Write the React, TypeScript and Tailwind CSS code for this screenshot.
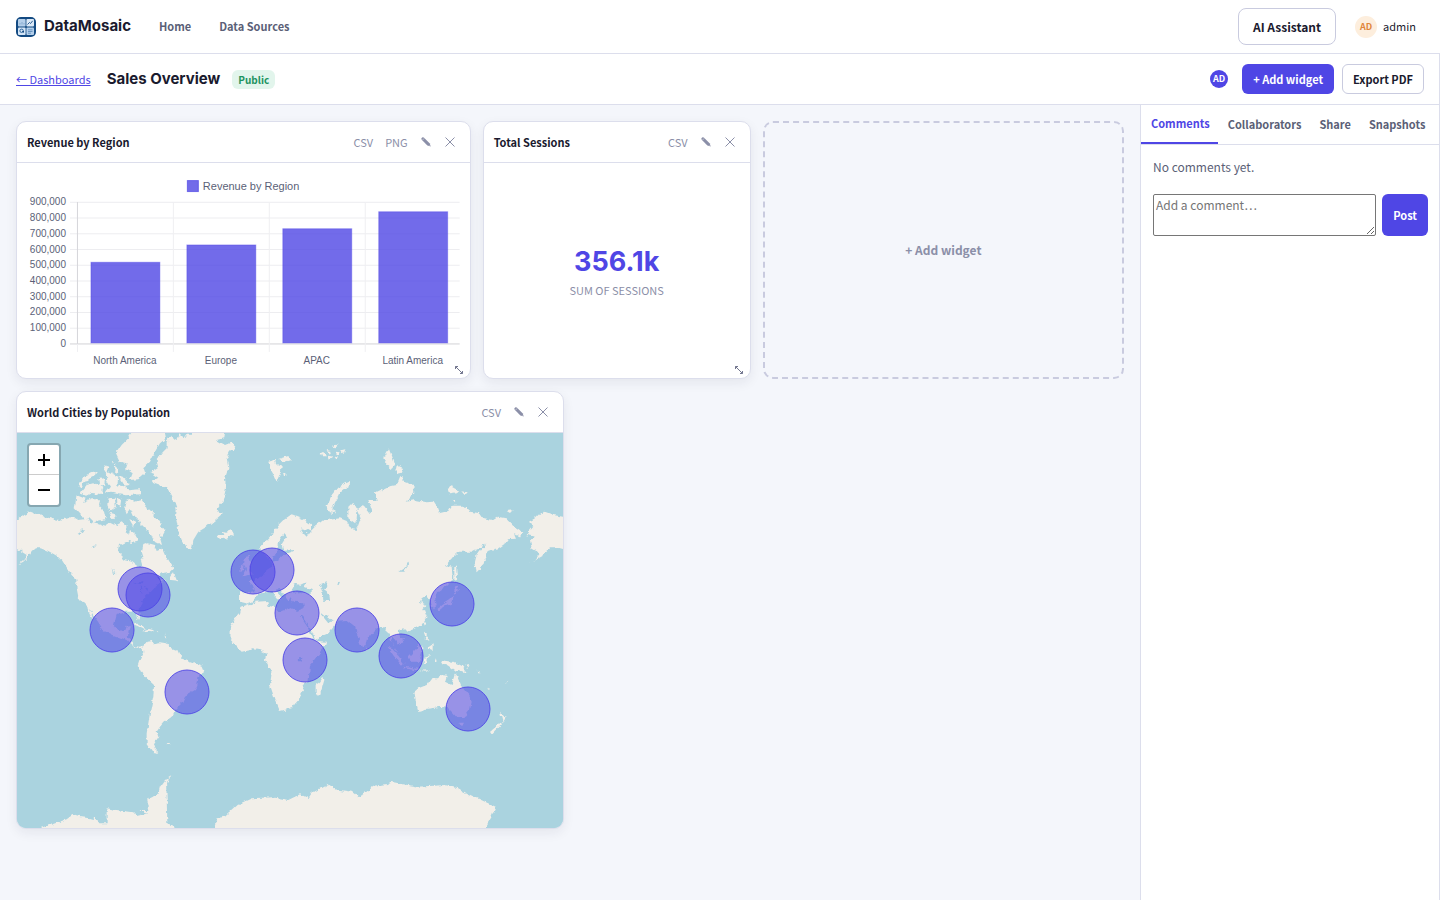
import type { ReactNode } from "react";

const bars = [
  { label: "North America", value: 519000 },
  { label: "Europe", value: 629000 },
  { label: "APAC", value: 732000 },
  { label: "Latin America", value: 840000 },
];

const cities = [
  { name: "Chicago", x: 390, y: 612 },
  { name: "New York", x: 414, y: 630 },
  { name: "Mexico City", x: 306, y: 735 },
  { name: "Sao Paulo", x: 531, y: 921 },
  { name: "London", x: 729, y: 561 },
  { name: "Berlin", x: 786, y: 555 },
  { name: "Cairo", x: 861, y: 684 },
  { name: "Nairobi", x: 885, y: 825 },
  { name: "Mumbai", x: 1041, y: 735 },
  { name: "Singapore", x: 1173, y: 813 },
  { name: "Tokyo", x: 1326, y: 657 },
  { name: "Sydney", x: 1374, y: 972 },
];

const land = [
  // North America
  "0,405 21,405 40,390 62,380 85,390 105,395 130,403 150,405 165,400 185,393 205,405 235,402 240,412 265,418 290,425 300,410 320,420 335,412 350,425 345,440 365,455 350,470 330,480 325,505 345,525 365,530 385,545 395,548 390,530 400,515 395,500 400,480 415,475 435,480 440,495 458,488 470,515 490,550 480,560 455,565 440,575 450,585 465,582 445,600 430,610 405,635 390,660 388,690 385,708 378,690 370,680 345,680 320,690 312,720 325,740 345,738 350,725 362,722 358,745 350,755 365,768 370,780 385,785 398,782 398,788 385,790 365,780 350,765 310,750 280,735 265,712 250,690 240,675 225,660 205,635 198,600 200,585 175,555 160,530 140,512 115,498 95,490 75,490 65,498 55,515 40,530 25,538 45,520 50,510 35,500 21,490 0,490",
  "480,572 490,560 502,590 480,588",
  "232,672 240,690 252,708 246,690 240,676",
  // South America
  "398,785 410,770 425,768 430,775 450,772 468,775 480,788 505,798 515,820 545,830 575,842 580,855 575,870 565,880 562,900 555,915 525,932 515,955 492,978 487,990 470,1005 460,1013 450,1025 440,1040 445,1055 432,1075 438,1095 448,1104 425,1100 410,1078 410,1045 420,985 430,935 432,900 410,880 390,852 383,840 390,820 400,802",
  // Greenland
  "470,170 485,155 500,165 508,148 520,160 530,146 555,146 570,130 645,130 640,160 620,165 645,180 665,172 680,186 660,200 650,220 655,250 645,280 648,310 638,350 625,370 635,388 615,405 590,425 565,440 550,465 545,495 530,490 515,465 505,435 498,400 500,370 485,330 470,308 440,298 425,290 445,278 420,262 445,245 440,225 455,205 470,190",
  // Arctic archipelago
  "375,130 462,130 468,160 450,175 438,195 420,230 400,250 405,265 385,283 360,285 368,265 345,250 350,235 330,230 318,205 335,180 355,160",
  "280,240 295,245 290,260 305,268 300,280 285,262", "303,225 312,232 305,235",
  "205,300 225,272 245,262 260,258 255,270 235,280 240,290 220,295 212,308",
  "210,325 230,300 255,293 280,308 275,327 245,324 228,332", "265,283 288,278 286,302 268,302",
  "285,320 300,302 290,285 305,268 325,278 322,300 345,305 355,316 390,313 390,328 345,331 308,324",
  "316,238 328,260 312,264", "325,273 345,280 362,300 343,302",
  "200,331 227,341 219,354 245,343 270,343 267,360 282,380 287,402 262,407 255,417 238,400 222,404 213,390 194,370",
  "296,340 314,338 318,366 300,378 292,360", "321,338 334,343 330,368 322,360", "298,383 320,390 308,404",
  "346,350 365,342 375,350 395,344 414,372 432,380 430,395 444,405 467,435 457,453 447,447 456,480 430,467 418,442 406,430 393,417 386,402 368,392 360,374 350,388 343,368",
  "360,438 380,453 384,470 365,474 353,460", "358,403 377,408 372,427",
  // Iceland and the British Isles
  "625,450 640,450 635,438 652,440 665,435 672,448 650,465 632,458",
  "705,515 716,513 722,530 718,545 732,565 710,572 698,573 708,555 702,538", "690,545 700,540 700,558 688,560",
  // Svalbard and Franz Josef Land
  "775,230 795,225 800,240 815,245 812,260 800,290 790,268 780,250", "805,222 835,213 842,225 820,232", "818,262 830,268 822,276",
  "925,208 940,204 948,214 935,214", "950,195 962,198 956,206", "966,184 982,178 978,192", "975,200 992,202 985,212", "990,196 1006,192 1002,204", "955,212 970,215 960,222", "974,216 984,214 980,224",
  // Africa and Eurasia
  "690,650 690,622 715,622 735,618 728,600 715,590 735,585 755,575 770,555 785,545 785,525 770,515 755,505 750,490 765,470 785,450 805,420 820,405 845,388 865,395 885,405 903,418 903,432 890,438 870,430 880,445 890,455 900,440 915,425 940,405 955,405 990,400 1010,408 1025,432 1037,435 1043,420 1015,400 1015,365 1030,350 1040,370 1037,400 1043,425 1052,400 1040,375 1060,360 1080,385 1087,380 1075,345 1100,345 1095,325 1135,305 1160,300 1170,275 1185,292 1210,300 1213,325 1190,350 1215,345 1250,352 1270,350 1280,365 1287,385 1315,378 1325,362 1360,362 1380,380 1410,385 1420,400 1450,405 1465,395 1490,400 1515,425 1537,440 1530,455 1510,447 1515,458 1490,460 1493,470 1465,490 1445,495 1430,500 1420,540 1400,562 1395,530 1400,510 1420,485 1430,475 1405,490 1385,500 1345,500 1325,520 1308,540 1325,545 1328,575 1315,600 1285,620 1275,635 1280,660 1268,670 1260,645 1250,630 1235,640 1230,650 1250,660 1240,670 1250,695 1235,720 1210,733 1190,740 1180,730 1165,735 1170,755 1185,770 1170,780 1150,755 1145,770 1160,795 1168,812 1155,790 1142,765 1135,745 1125,735 1120,725 1105,725 1090,740 1070,765 1067,780 1055,785 1045,760 1035,725 1010,705 975,707 965,705 940,685 935,687 955,712 970,705 980,715 955,745 920,760 917,768 948,770 945,780 920,815 900,840 898,865 895,890 878,900 882,915 865,945 845,970 810,978 795,945 780,900 785,865 765,825 770,805 750,795 730,793 695,800 675,780 658,760 660,725 675,700 690,685 695,665 718,657",
  "940,875 943,885 930,930 917,925 917,900 930,890",
  // Russian Arctic islands
  "1018,290 1022,297 990,320 978,345 967,365 975,385 960,382 950,365 965,330 985,305",
  "1128,205 1137,190 1145,210 1155,238 1145,252 1130,238 1120,220", "1160,245 1168,240 1180,262 1155,268",
  "1313,312 1325,304 1347,316 1338,325 1318,328", "1350,318 1370,322 1365,327", "1325,342 1340,346 1332,351", "1490,378 1508,376 1500,384",
  // Eastern Alaska wrap
  "1690,395 1659,395 1630,390 1605,380 1590,385 1575,400 1557,410 1570,425 1560,437 1550,450 1575,455 1560,465 1565,490 1590,505 1575,525 1555,535 1600,510 1620,490 1640,490 1659,495 1690,495",
  // Sakhalin and Japan
  "1333,545 1338,545 1342,585 1333,590", "1335,603 1350,613 1332,626", "1332,630 1326,655 1300,665 1285,678 1283,668 1300,656 1318,645",
  // South-east Asia
  "1195,735 1203,733 1200,742", "1240,710 1247,708 1244,722", "1242,742 1250,740 1250,755 1262,770 1248,762", "1253,788 1268,778 1268,795 1260,790",
  "1195,815 1220,790 1228,780 1237,785 1235,810 1225,830 1205,830", "1133,785 1145,790 1165,812 1184,838 1172,838 1148,808", "1180,845 1222,851 1220,856 1182,850",
  "1240,820 1262,812 1248,822 1254,840 1246,832 1242,842", "1230,857 1260,856 1252,860", "1275,820 1280,830 1275,832",
  "1067,782 1075,792 1070,798",
  "1290,825 1305,828 1330,830 1355,842 1372,864 1345,855 1335,857 1315,842 1297,838", "1362,842 1382,840 1372,848", "1400,855 1412,862 1405,862",
  // Australia and New Zealand
  "1213,920 1225,910 1250,900 1265,880 1285,880 1290,870 1310,872 1305,890 1325,900 1335,865 1345,880 1355,905 1375,930 1385,950 1380,975 1365,995 1340,997 1325,980 1315,970 1290,965 1265,970 1245,972 1225,978 1218,950",
  "1347,1013 1362,1013 1355,1026", "1470,980 1480,992 1490,995 1478,1012 1474,998", "1470,1010 1476,1018 1450,1045 1440,1040 1458,1025", "1430,910 1442,915 1440,918", "1486,895 1498,890 1490,898",
  // Caribbean
  "370,718 385,716 412,732 398,730", "398,738 415,732 435,738 425,742", "440,738 448,739 444,742", "465,745 468,760 464,758", "482,1077 470,1077 474,1082",
  // Antarctica
  "95,1365 95,1329 140,1313 170,1303 187,1290 205,1295 260,1303 268,1315 290,1315 290,1270 320,1275 370,1282 380,1293 415,1285 388,1275 418,1275 412,1245 432,1235 445,1225 450,1205 465,1185 490,1170 468,1190 470,1235 472,1315 490,1329 490,1365",
  "612,1365 612,1329 620,1300 640,1297 680,1260 725,1240 790,1237 835,1245 870,1228 895,1240 905,1225 955,1197 975,1213 1025,1220 1047,1237 1090,1205 1135,1200 1140,1190 1175,1197 1225,1205 1305,1200 1345,1210 1370,1225 1425,1250 1457,1265 1445,1295 1425,1329 1425,1365",
];

const water = [
  // Mediterranean
  "712,655 735,646 742,628 770,622 785,618 800,638 812,646 815,638 795,614 808,612 822,630 835,648 840,636 852,650 880,652 882,670 860,678 835,670 810,680 800,668 776,662 772,648 740,650 720,658",
  // Black Sea, Caspian and Aral
  "845,613 855,595 870,600 890,590 880,605 905,615 905,627 870,621 850,623",
  "930,600 950,592 955,605 942,613 958,625 960,648 940,647 938,625", "978,592 990,590 985,602",
  // Baltic
  "803,500 803,472 822,446 829,455 815,478 820,494 855,492 850,499 825,508 800,525 785,528 792,512",
  // Red Sea
  "870,693 877,693 892,716 906,740 917,765 908,758 890,722",
  // Lakes
  "1165,560 1188,545 1195,530 1197,540 1180,560", "867,820 877,818 875,830 866,828", "308,548 316,568 311,566", "210,435 225,432 218,442", "200,445 215,442 210,450", "240,485 262,480 250,486", "372,596 400,588 398,598", "392,604 398,608 394,628", "400,600 415,608 412,618",
];

const body = "font-['Noto_Sans_CJK_SC','Noto_Sans',sans-serif]";
const heading = "font-[Inter,'Open_Sans',sans-serif]";

function Logo() {
  return (
    <svg viewBox="0 0 20 20" className="h-5 w-5 shrink-0" aria-hidden="true">
      <rect width="20" height="20" rx="5" fill="#134a82" />
      <rect x="2" y="2" width="7.6" height="7.6" rx="1" fill="#b4cfea" />
      <rect x="10.4" y="2" width="7.6" height="7.6" rx="1" fill="#dbe9f7" />
      <rect x="2" y="10.4" width="7.6" height="7.6" rx="1" fill="#d5e6f7" />
      <rect x="10.4" y="10.4" width="7.6" height="7.6" rx="1" fill="#b4cfea" />
      <path d="M4 7.5V6M6 7.5V5M8 7.5V6" stroke="#86aacf" strokeWidth="1" />
      <path d="M11.5 7.5l2-2 1 1 2.2-2.7" stroke="#134a82" strokeWidth=".9" fill="none" />
      <circle cx="5.6" cy="13.8" r="1.7" fill="none" stroke="#2d659c" strokeWidth="1" />
      <path d="M5.6 14h2.4v2z" fill="#134a82" />
      <path d="M12 12.8h4.5M12 14.5h4.5M12 16.2h3" stroke="#5585b6" strokeWidth=".8" />
    </svg>
  );
}

function Widget({ title, actions, resizable, className, children }: { title: string; actions: string[]; resizable?: boolean; className: string; children: ReactNode }) {
  return (
    <section className={`relative flex flex-col overflow-hidden rounded-[10px] border border-[#dcdeec] bg-white shadow-[0_4px_12px_rgba(30,30,60,0.07)] ${className}`}>
      <header className="flex h-10 shrink-0 items-center justify-between pr-2 pl-2.5">
        <h2 className="text-[11px] font-bold text-[#1a1a2e]">{title}</h2>
        <div className="flex items-center text-[11px] text-[#8b8fa8]">
          {actions.map((action) => (
            <button key={action} type="button" className="px-1.5">{action}</button>
          ))}
          <button type="button" aria-label={`Edit ${title}`} className="flex w-6 justify-center">
            <svg viewBox="0 0 10 10" className="h-2.5 w-2.5" aria-hidden="true">
              <path d="M.3 1.2L1.5.2l1.3.4L8.6 6.2l1.2 3.3-3.4-1L.7 2.8z" fill="currentColor" />
              <path d="M1.6 3l1.5-1.6M8.6 8.8l.6-.7" stroke="#fff" strokeWidth=".5" />
            </svg>
          </button>
          <button type="button" aria-label={`Remove ${title}`} className="flex w-6 justify-center">
            <svg viewBox="0 0 10 10" className="h-2.5 w-2.5" aria-hidden="true">
              <path d="M.5.5l9 9M9.5.5l-9 9" stroke="currentColor" strokeWidth="1" />
            </svg>
          </button>
        </div>
      </header>
      <div className="flex min-h-0 flex-1 flex-col border-t border-[#dcdeec]">{children}</div>
      {resizable && (
        <svg viewBox="0 0 10 10" className="absolute right-1.5 bottom-[3px] h-2.5 w-2.5" aria-hidden="true">
          <path d="M1.5 4V1.5H4M1.5 1.5l7 7M8.5 6v2.5H6" fill="none" stroke="#73778f" strokeWidth="1" />
        </svg>
      )}
    </section>
  );
}

function RevenueChart() {
  const bottom = 181;
  const step = 15.75;
  const left = 60;
  const band = 96;
  return (
    <svg viewBox="0 0 453 215" className="h-full w-full font-['Liberation_Sans',sans-serif]" role="img" aria-label="Revenue by Region">
      <rect x="170.5" y="17.5" width="11" height="11" fill="#726be9" stroke="#4f46e5" strokeOpacity=".7" />
      <text x="186" y="27" fontSize="11" fill="#5b5f77">Revenue by Region</text>
      {Array.from({ length: 10 }, (_, i) => (
        <g key={i}>
          <line x1="53" x2="443" y1={bottom - i * step} y2={bottom - i * step} stroke={i === 0 ? "#d2d2d6" : "#ededf0"} />
          <text x="49" y={bottom - i * step + 3} textAnchor="end" fontSize="10" fill="#5b5f77">{(i * 100000).toLocaleString("en-US")}</text>
        </g>
      ))}
      {[0, 1, 2, 3].map((i) => (
        <line key={i} x1={left + i * band + 0.5} x2={left + i * band + 0.5} y1="39" y2="189" stroke="#efeff2" />
      ))}
      <line x1="60.5" x2="60.5" y1="39" y2="181" stroke="#d6d6da" />
      {bars.map((bar, i) => {
        const height = (bar.value / 100000) * step;
        return (
          <g key={bar.label}>
            <rect x={left + i * band + 14} y={bottom - height} width="69" height={height - 1} fill="#4f46e5" fillOpacity=".8" stroke="#4f46e5" strokeOpacity=".4" />
            <text x={left + i * band + 48} y="201" textAnchor="middle" fontSize="10" fill="#5b5f77">{bar.label}</text>
          </g>
        );
      })}
    </svg>
  );
}

function WorldMap() {
  return (
    <div className="relative min-h-0 flex-1 bg-[#aad3df]">
      <svg viewBox="21 144 1638 1185" preserveAspectRatio="xMidYMid slice" className="absolute inset-0 h-full w-full" role="img" aria-label="World map with city markers">
        <defs>
          <filter id="coast" x="-10" y="110" width="1710" height="1270" filterUnits="userSpaceOnUse">
            <feTurbulence type="fractalNoise" baseFrequency="0.06" numOctaves="3" seed="4" result="noise" />
            <feDisplacementMap in="SourceGraphic" in2="noise" scale="15" xChannelSelector="R" yChannelSelector="G" />
          </filter>
        </defs>
        <rect x="21" y="144" width="1638" height="1185" fill="#aad3df" />
        <g filter="url(#coast)">
          {land.map((points) => <polygon key={points} points={points} fill="#f2efe9" />)}
          {water.map((points) => <polygon key={points} points={points} fill="#aad3df" />)}
        </g>
        {cities.map((city) => (
          <circle key={city.name} cx={city.x} cy={city.y} r="66" fill="#4f46e5" fillOpacity=".55" stroke="#4f46e5" strokeOpacity=".9" strokeWidth="3" />
        ))}
      </svg>
      <div className="absolute top-2.5 left-2.5 flex flex-col overflow-hidden rounded border-2 border-[#86a7b1] bg-white">
        <button type="button" aria-label="Zoom in" className="flex h-[30px] w-[30px] items-center justify-center border-b border-[#ccc]">
          <svg viewBox="0 0 12 12" className="h-3 w-3" aria-hidden="true"><path d="M0 6h12M6 0v12" stroke="#000" strokeWidth="2" /></svg>
        </button>
        <button type="button" aria-label="Zoom out" className="flex h-[30px] w-[30px] items-center justify-center">
          <svg viewBox="0 0 12 12" className="h-3 w-3" aria-hidden="true"><path d="M0 6h12" stroke="#000" strokeWidth="2" /></svg>
        </button>
      </div>
    </div>
  );
}

export default function App() {
  return (
    <div className={`flex min-h-screen flex-col bg-[#f4f6fb] text-[#1a1a2e] ${body}`}>
      <header className="flex h-[53px] items-center justify-between bg-white px-4">
        <div className="flex items-center">
          <Logo />
          <span className={`ml-2 text-[15px] font-bold ${heading}`}>DataMosaic</span>
          <nav className="ml-7 flex gap-7 text-[11px] font-bold text-[#5b5f77]">
            <a href="#home">Home</a>
            <a href="#sources">Data Sources</a>
          </nav>
        </div>
        <div className="flex items-center">
          <button type="button" className="h-[37px] rounded-lg border border-[#c9cbdf] bg-white px-3.5 text-xs font-bold">AI Assistant</button>
          <button type="button" className="ml-[19px] flex items-center gap-1.5 pr-2 text-[11px]">
            <span className="flex h-[22px] w-[22px] items-center justify-center rounded-full bg-[#fdeedd] text-[9px] font-bold text-[#e0853a]">AD</span>
            admin
          </button>
        </div>
      </header>

      <div className="flex flex-1 flex-col border-t border-r border-[#dcdeec]">
        <div className="flex h-[51px] shrink-0 items-center justify-between border-b border-[#dcdeec] bg-white px-4 pr-[15px]">
          <div className="flex items-center">
            <a href="#dashboards" className="text-[11px] text-[#4f46e5] underline">← Dashboards</a>
            <h1 className={`ml-4 text-[15px] font-bold ${heading}`}>Sales Overview</h1>
            <span className="ml-3 rounded-md bg-[#e2f5ec] px-1.5 text-[10px] leading-[19px] font-bold text-[#1d9361]">Public</span>
          </div>
          <div className="flex items-center">
            <span className="mr-3.5 flex h-[18px] w-[18px] items-center justify-center rounded-full bg-[#4f46e5] text-[9px] font-bold text-white">AD</span>
            <button type="button" className="mr-2 h-[30px] rounded-md bg-[#4f46e5] px-[11px] text-[11px] font-bold text-white">+ Add widget</button>
            <button type="button" className="h-[30px] rounded-md border border-[#c9cbdf] bg-white px-2.5 text-[11px] font-bold">Export PDF</button>
          </div>
        </div>

        <div className="flex flex-1">
          <main className="grid min-w-0 flex-1 auto-rows-max grid-cols-12 content-start gap-3 p-4">
            <Widget title="Revenue by Region" actions={["CSV", "PNG"]} resizable className="col-span-5 h-[258px]">
              <RevenueChart />
            </Widget>
            <Widget title="Total Sessions" actions={["CSV"]} resizable className="col-span-3 h-[258px]">
              <div className="flex flex-1 flex-col items-center justify-center pt-1">
                <p className={`text-[27px] leading-8 font-bold text-[#4f46e5] ${heading}`}>356.1k</p>
                <p className="mt-1 text-[11px] text-[#8b8fa8]">SUM OF SESSIONS</p>
              </div>
            </Widget>
            <button type="button" className="col-span-4 h-[258px] rounded-[10px] border-2 border-dashed border-[#c9cbdf] text-xs font-bold text-[#8b8fa8]">+ Add widget</button>
            <Widget title="World Cities by Population" actions={["CSV"]} className="col-span-6 h-[438px]">
              <WorldMap />
            </Widget>
          </main>

          <aside className="w-[299px] shrink-0 border-l border-[#dcdeec] bg-white">
            <div role="tablist" className="flex h-10 border-b border-[#dcdeec] text-[11px] font-bold text-[#5b5f77]">
              <button type="button" role="tab" aria-selected="true" className="border-b-2 border-[#4f46e5] pr-2 pl-2.5 text-[#4f46e5]">Comments</button>
              <button type="button" role="tab" aria-selected="false" className="pr-2 pl-2.5">Collaborators</button>
              <button type="button" role="tab" aria-selected="false" className="pr-2 pl-2.5">Share</button>
              <button type="button" role="tab" aria-selected="false" className="pr-2 pl-2.5">Snapshots</button>
            </div>
            <div className="p-3 pr-[11px]">
              <p className="text-xs leading-5 text-[#5b5f77]">No comments yet.</p>
              <form className="mt-[17px] flex gap-1.5">
                <textarea aria-label="Add a comment" placeholder="Add a comment…" className="h-[42px] min-w-0 flex-1 resize rounded-[2px] border border-[#767676] bg-white p-0.5 text-xs placeholder:text-[#757575]" />
                <button type="button" className="h-[42px] rounded-md bg-[#4f46e5] px-[11px] text-[11px] font-bold text-white">Post</button>
              </form>
            </div>
          </aside>
        </div>
      </div>
    </div>
  );
}
